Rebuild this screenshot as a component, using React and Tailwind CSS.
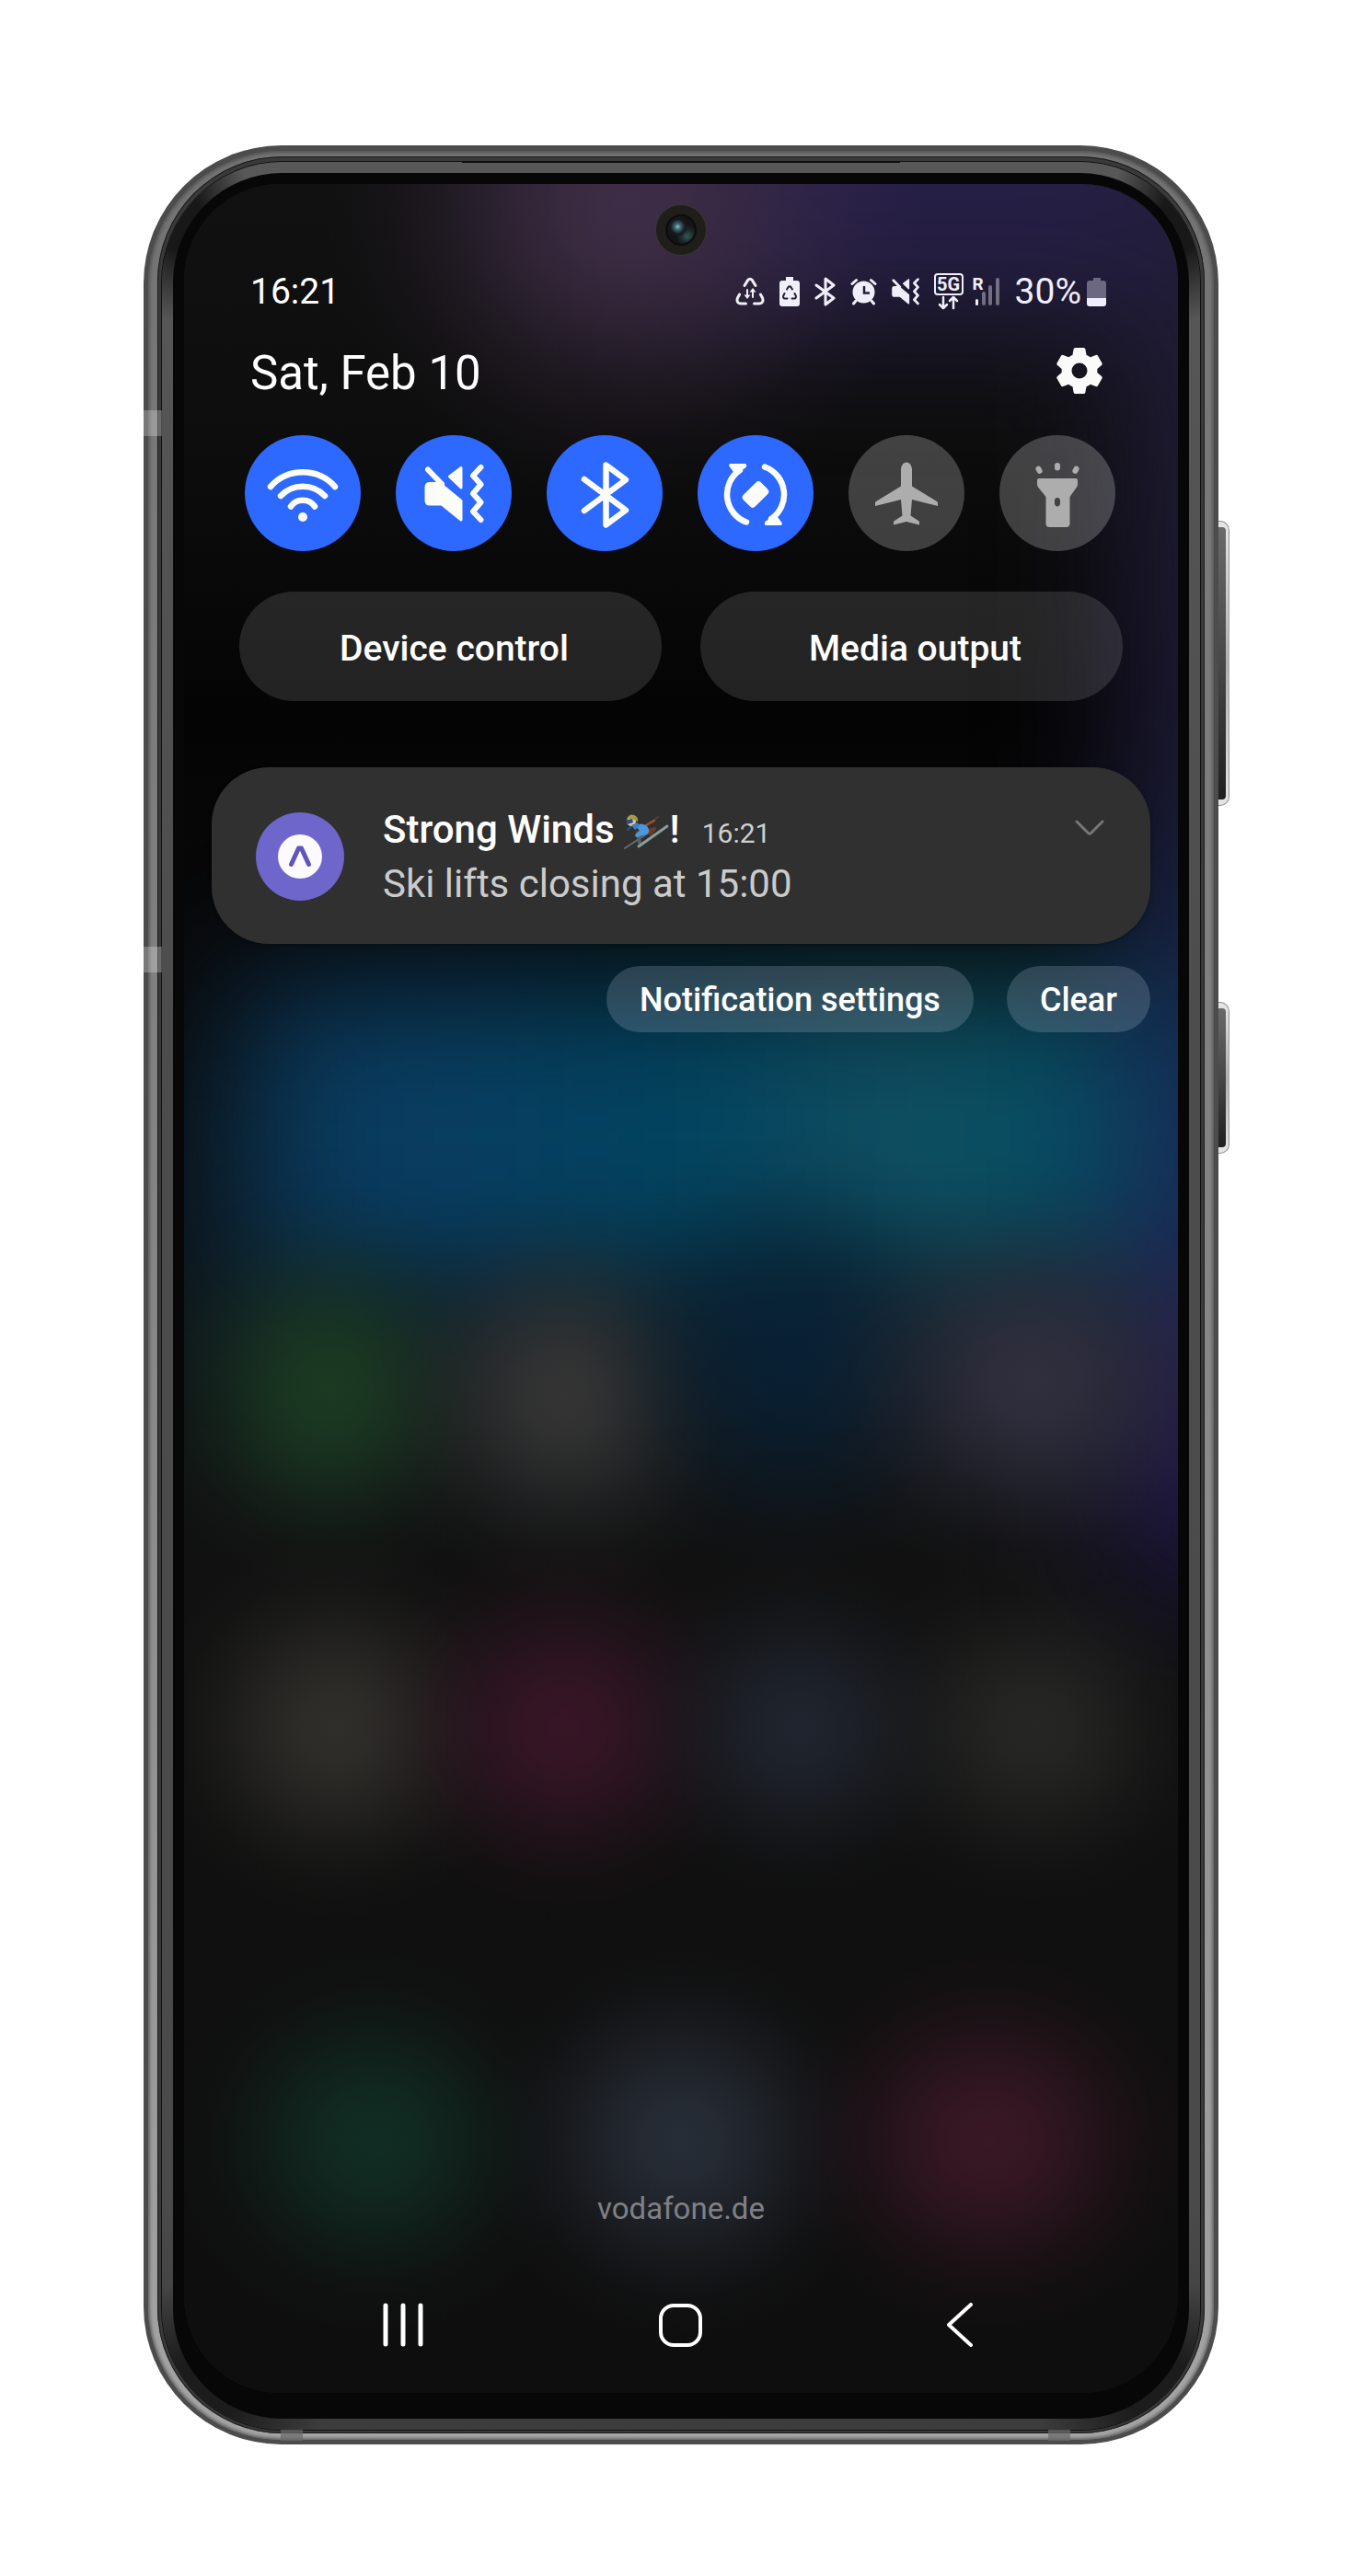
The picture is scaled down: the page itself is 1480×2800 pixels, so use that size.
import React from "react";

const glows = [
  { x: 480, y: 20, rx: 330, ry: 330, color: "#46324f", o: 0.85 },
  { x: 158, y: 1310, rx: 210, ry: 220, color: "#1b3a22", o: 1 },
  { x: 413, y: 1315, rx: 220, ry: 220, color: "#343434", o: 1 },
  { x: 661, y: 1270, rx: 230, ry: 250, color: "#082136", o: 0.9 },
  { x: 923, y: 1300, rx: 250, ry: 230, color: "#302f3e", o: 1 },
  { x: 165, y: 1677, rx: 210, ry: 210, color: "#2f2e2a", o: 1 },
  { x: 413, y: 1677, rx: 220, ry: 210, color: "#371526", o: 1 },
  { x: 668, y: 1677, rx: 200, ry: 190, color: "#1f242e", o: 1 },
  { x: 923, y: 1677, rx: 210, ry: 200, color: "#262625", o: 1 },
  { x: 205, y: 2126, rx: 220, ry: 210, color: "#112d23", o: 1 },
  { x: 540, y: 2126, rx: 220, ry: 215, color: "#272d37", o: 1 },
  { x: 875, y: 2126, rx: 230, ry: 215, color: "#391725", o: 1 },
];

function Wallpaper() {
  return (
    <svg
      className="absolute inset-0 h-full w-full"
      viewBox="0 0 1080 2400"
      preserveAspectRatio="none"
      aria-hidden="true"
    >
      <defs>
        <filter id="soft" x="-50%" y="-50%" width="200%" height="200%" colorInterpolationFilters="sRGB">
          <feGaussianBlur stdDeviation="70" />
        </filter>
        <linearGradient id="widget" x1="0" x2="1" y1="0" y2="0">
          <stop offset="0" stopColor="#0a3554" />
          <stop offset="0.18" stopColor="#0a3d62" />
          <stop offset="0.5" stopColor="#01435f" />
          <stop offset="0.75" stopColor="#124f61" />
          <stop offset="0.9" stopColor="#044e62" />
          <stop offset="1" stopColor="#0b4462" />
        </linearGradient>
        <linearGradient id="base" x1="0" x2="0" y1="0" y2="1">
          <stop offset="0" stopColor="#111111" />
          <stop offset="0.12" stopColor="#0d0d0d" />
          <stop offset="0.24" stopColor="#040404" />
          <stop offset="0.38" stopColor="#0a0a0c" />
          <stop offset="0.52" stopColor="#0f1519" />
          <stop offset="0.62" stopColor="#111111" />
          <stop offset="1" stopColor="#0e0e0e" />
        </linearGradient>
        <linearGradient id="edge" x1="0" x2="0" y1="0" y2="1">
          <stop offset="0" stopColor="#262046" />
          <stop offset="0.3" stopColor="#1f1c34" />
          <stop offset="0.5" stopColor="#1e1a34" />
          <stop offset="0.68" stopColor="#152a52" />
          <stop offset="0.77" stopColor="#182a54" />
          <stop offset="0.85" stopColor="#2a2054" />
          <stop offset="1" stopColor="#1c1244" />
        </linearGradient>
        {glows.map((g, i) => (
          <radialGradient key={i} id={"glow" + i}>
            <stop offset="0" stopColor={g.color} stopOpacity={g.o} />
            <stop offset="0.2" stopColor={g.color} stopOpacity={g.o * 0.89} />
            <stop offset="0.4" stopColor={g.color} stopOpacity={g.o * 0.63} />
            <stop offset="0.6" stopColor={g.color} stopOpacity={g.o * 0.33} />
            <stop offset="0.8" stopColor={g.color} stopOpacity={g.o * 0.1} />
            <stop offset="1" stopColor={g.color} stopOpacity="0" />
          </radialGradient>
        ))}
      </defs>
      <rect width="1080" height="2400" fill="url(#base)" />
      <g filter="url(#soft)">
        <rect x="560" y="-300" width="800" height="450" fill="#261f46" />
        <rect x="1020" y="-300" width="300" height="1820" fill="url(#edge)" />
        <rect x="55" y="872" width="975" height="325" fill="url(#widget)" />
      </g>
      {glows.map((g, i) => (
        <ellipse key={i} cx={g.x} cy={g.y} rx={g.rx} ry={g.ry} fill={"url(#glow" + i + ")"} />
      ))}
    </svg>
  );
}

/* Status bar glyphs */

function DataSaverIcon() {
  return (
    <svg width="32" height="32" viewBox="0 0 32 32" fill="none" stroke="currentColor" strokeWidth="3" strokeLinecap="round" strokeLinejoin="round" aria-label="Data saver" role="img">
      <path d="M10 9.5 13.6 3.6Q16 .8 18.4 3.6L22 9.5" />
      <path d="M4.6 19 2.4 23Q.8 28.6 6 29h5.500" />
      <path d="M27.400 19 29.600 23Q31.200 28.600 26 29h-5.500" />
      <path d="M13 14v8M19 22v-8" strokeWidth="2" />
      <path d="M9.500 19.500h7L13 24zM15.500 16.500h7L19 12z" fill="currentColor" stroke="none" />
    </svg>
  );
}

function RecycleBatteryIcon() {
  return (
    <svg width="22" height="32" viewBox="0 0 22 32" role="img" aria-label="Power saving">
      <path fill="currentColor" d="M7 0h8v4h4q3 0 3 3v22q0 3-3 3H3q-3 0-3-3V7q0-3 3-3h4z" />
      <g fill="none" stroke="#211c3d" strokeWidth="2" strokeLinecap="round">
        <path d="M8 13.500 9.600 11Q11 9.400 12.400 11L14 13.500" />
        <path d="M5.500 18 4.200 20.500Q3.600 23.400 6 23.500h2.500" />
        <path d="M16.500 18l1.300 2.500q.6 2.900-1.800 3h-2.500" />
      </g>
    </svg>
  );
}

function SmallBluetoothIcon() {
  return (
    <svg width="23" height="32" viewBox="0 0 23 32" fill="none" stroke="currentColor" strokeWidth="3" strokeLinecap="round" strokeLinejoin="round" role="img" aria-label="Bluetooth">
      <path d="M2 9 21 23 12 30V2l9 7L2 23" />
    </svg>
  );
}

function AlarmIcon() {
  return (
    <svg width="29" height="30" viewBox="0 0 29 30" role="img" aria-label="Alarm">
      <circle cx="14.500" cy="15.500" r="12" fill="currentColor" />
      <g fill="none" stroke="currentColor" strokeWidth="3" strokeLinecap="round">
        <path d="M2 6.500 6.500 2.500M27 6.500 22.500 2.500M6 25l-2.500 3M23 25l2.500 3" />
      </g>
      <path d="M15 9v7.500h6" fill="none" stroke="#211c3d" strokeWidth="2.500" />
    </svg>
  );
}

function SpeakerShape() {
  return (
    <g fill="currentColor" stroke="currentColor" strokeLinejoin="round" strokeLinecap="round">
      <path strokeWidth="3" d="M37 52.500h11L71 71.500V92L50 75H37q-4 0-4-4V56.500q0-4 4-4z" />
      <path strokeWidth="3" d="M58.500 45 71 35.500V57z" />
      <path strokeWidth="6" d="M35 37.500 50 53" />
      <path fill="none" strokeWidth="6" d="M92.500 35 84 44l8.500 9.500-8.500 10 8.500 9.500-8.500 10 8.500 9" />
    </g>
  );
}

function SmallMuteIcon() {
  return (
    <svg width="30" height="30" viewBox="31 32 65 64" role="img" aria-label="Vibrate">
      <SpeakerShape />
    </svg>
  );
}

function FiveGIcon() {
  return (
    <span className="flex w-8 flex-col items-center">
      <span className="flex h-6 w-8 items-center justify-center rounded-[4px] border-2 border-current text-[20px] leading-5 font-bold">
        5G
      </span>
      <svg width="24" height="16" viewBox="0 0 24 16" fill="none" stroke="currentColor" strokeWidth="2.500" strokeLinecap="round" strokeLinejoin="round" aria-hidden="true">
        <path d="M6 2v12M2 10l4 4 4-4M17 14V2M13 6l4-4 4 4" />
      </svg>
    </span>
  );
}

function SignalIcon() {
  return (
    <span className="relative">
      <span className="absolute -top-1 left-0 text-[19px] leading-6 font-bold">R</span>
      <svg width="30" height="32" viewBox="0 0 30 32" role="img" aria-label="Roaming signal">
        <rect x="3" y="24" width="3" height="7" rx="1.500" fill="currentColor" />
        <g fill="currentColor" opacity="0.4">
          <rect x="10" y="16" width="4" height="15" rx="2" />
          <rect x="17" y="9" width="4" height="22" rx="2" />
          <rect x="25" y="1" width="4" height="30" rx="2" />
        </g>
      </svg>
    </span>
  );
}

function BatteryIcon() {
  return (
    <svg width="21" height="32" viewBox="0 0 21 32" role="img" aria-label="Battery">
      <path fill="#6c6882" d="M7 1h8v3h3q3 0 3 3v16H0V7q0-3 3-3h4z" />
      <path fill="currentColor" d="M0 23h21v6q0 3-3 3H3q-3 0-3-3z" />
    </svg>
  );
}

/* Quick setting glyphs, drawn on the button's own 126-unit square */

const glyphs = {
  wifi: (
    <g fill="none" stroke="currentColor" strokeWidth="6.500" strokeLinecap="round">
      <path d="M28 56A47 47 0 0 1 98 56" />
      <path d="M39 66A33 33 0 0 1 87 66" />
      <path d="M50 77.500A16 16 0 0 1 76 77.500" />
      <circle cx="63" cy="89" r="5" fill="currentColor" stroke="none" />
    </g>
  ),
  mute: <SpeakerShape />,
  bluetooth: (
    <path d="M41 48 86 81.500 64.500 97.500V32.500L86 48.500 41 82" fill="none" stroke="currentColor" strokeWidth="6.500" strokeLinecap="round" strokeLinejoin="round" />
  ),
  rotate: (
    <g fill="currentColor">
      <rect x="54" y="51" width="18" height="27" rx="4" transform="rotate(45 63 64.500)" />
      {["", "rotate(180 63 64.500)"].map((t) => (
        <g key={t} transform={t || undefined}>
          <path d="M73 34.500A32 32 0 0 1 80 91" fill="none" stroke="currentColor" strokeWidth="6.500" strokeLinecap="round" />
          <path d="M74 93.500 83 88l4 1 4.500 6q1 3-1.500 3H74q-2.500-1.500 0-4.500z" />
        </g>
      ))}
    </g>
  ),
  plane: (
    <path fill="currentColor" d="M63 29.500c3.500 0 6 4 6 8v18l27 16.500q1 .500 1 1.500v3.500L69 70l-1.500 17.500L76 93q1 .500 1 1.500v3L63 94l-14 3.500v-3q0-1 1-1.500l8.500-5.500L57 70l-28 7V73.500q0-1 1-1.500l27-16.500v-18c0-4 2.500-8 6-8z" />
  ),
  torch: (
    <g fill="currentColor">
      <rect x="60" y="30" width="6" height="8.500" rx="3" />
      <rect x="40" y="33.500" width="6" height="8.500" rx="3" transform="rotate(-28 43 37.700)" />
      <rect x="80" y="33.500" width="6" height="8.500" rx="3" transform="rotate(28 83 37.700)" />
      <path fillRule="evenodd" d="M41 49q0-2 2-2h40q2 0 2 2v4q0 2-1 3.500L76.500 67v29q0 4-4 4h-18q-4 0-4-4V67L42 56.500q-1-1.500-1-3.500zM63 68c-1.800 0-3 1.300-3 3v3c0 2 1.200 3.500 3 3.500s3-1.500 3-3.500v-3c0-1.700-1.200-3-3-3z" />
    </g>
  ),
};

const toggles = [
  { id: "wifi", label: "Wi-Fi", on: true },
  { id: "mute", label: "Vibrate", on: true },
  { id: "bluetooth", label: "Bluetooth", on: true },
  { id: "rotate", label: "Auto rotate", on: true },
  { id: "plane", label: "Airplane mode", on: false },
  { id: "torch", label: "Torch", on: false },
];

function QuickToggle({ id, label, on }) {
  return (
    <button
      type="button"
      aria-label={label}
      aria-pressed={on}
      className={
        on
          ? "size-[126px] rounded-full bg-[#2d68ff] text-[#fcfdf8]"
          : "size-[126px] rounded-full bg-white/22 text-[#adadad]"
      }
    >
      <svg viewBox="0 0 126 126" className="size-full" aria-hidden="true">
        {glyphs[id]}
      </svg>
    </button>
  );
}

function SkierIcon() {
  return (
    <svg width="50" height="40" viewBox="0 0 50 40" role="img" aria-label="Skier" className="inline-block">
      <g fill="none" strokeLinecap="round" strokeLinejoin="round">
        <path d="M13 20 37 3" stroke="#5d3c33" strokeWidth="2" />
        <path d="M1 37 33 16" stroke="#666b6b" strokeWidth="2" />
        <path d="M24 19 33 16 29 21" stroke="#6d3a26" strokeWidth="4" />
        <path d="M16 25 17 31" stroke="#5b6068" strokeWidth="4" />
        <path d="M16 35 47 13" stroke="#8e9c9c" strokeWidth="3" />
        <path d="M8 13 4 17" stroke="#35507a" strokeWidth="2" />
        <path d="M24 12 33 7" stroke="#a14f2c" strokeWidth="2.500" />
      </g>
      <path d="M13 13q6-5 12 0 4 5 1 8-4 2-12 4-3-1-1-4l4-3z" fill="#4b97dc" />
      <circle cx="8" cy="8" r="5" fill="#d8c9a0" />
      <path d="M3 5q3-6 8-4 5 2 4 7L8 5z" fill="#a89a45" />
      <path d="M2 6.500 9 5l1 4-6 2z" fill="#2e4c86" />
      <path d="M8 12l7-3 2 4-5 4z" fill="#3c7fc4" />
    </svg>
  );
}

function GearIcon() {
  return (
    <svg width="50" height="50" viewBox="0 0 50 50" aria-hidden="true">
      <path
        fill="#fafafa"
        fillRule="evenodd"
        d="M20.500 0h9q1.600 0 1.900 1.500l1.100 6.200q2.300 1 4.300 2.500l5.900-2.200q1.500-.5 2.300.8l4.400 7.800q.8 1.300-.4 2.400l-4.700 4q.2 2 0 4l4.700 4q1.200 1.100.4 2.400l-4.400 7.800q-.8 1.300-2.300.8l-5.900-2.200q-2 1.500-4.300 2.500l-1.100 6.200Q31.100 50 29.500 50h-9q-1.600 0-1.900-1.500l-1.100-6.200q-2.300-1-4.300-2.500l-5.900 2.200q-1.500.5-2.300-.8L.6 33.400q-.8-1.300.4-2.400l4.700-4q-.2-2 0-4L1 19Q-.2 17.900.6 16.600L5 8.800Q5.800 7.500 7.300 8l5.900 2.200q2-1.500 4.300-2.500l1.100-6.200Q18.900 0 20.500 0zM25 16.500a8.500 8.500 0 1 0 0 17 8.500 8.500 0 0 0 0-17z"
      />
    </svg>
  );
}

function Notification() {
  return (
    <article className="flex items-center gap-[42px] rounded-[62px] bg-[#323232]/97 pt-[38px] pr-12 pb-9 pl-12 shadow-[0_1px_4px_rgba(0,0,0,0.3)]">
      <svg width="96" height="96" viewBox="0 0 96 96" className="shrink-0" role="img" aria-label="App">
        <circle cx="48" cy="48" r="48" fill="#6e66cb" />
        <circle cx="48" cy="48" r="24" fill="#fbfbff" />
        <path d="M38.500 56.500 46.500 39h3l8 17.500" fill="none" stroke="#6257b8" strokeWidth="5" strokeLinecap="round" strokeLinejoin="round" />
      </svg>
      <div className="min-w-0 flex-1">
        <h2 className="flex items-baseline text-[42px] leading-[59px] font-medium text-white">
          <span>Strong Winds</span>
          <span className="ml-2.5 h-10 self-center leading-none">
            <SkierIcon />
          </span>
          <span>!</span>
          <time className="ml-6 text-[30px] leading-none font-normal text-[#cfcfcf]">16:21</time>
        </h2>
        <p className="text-[42px] leading-[59px] text-[#cbcbcb]">Ski lifts closing at 15:00</p>
      </div>
      <button type="button" aria-label="Expand" className="flex h-10 items-center self-start pt-4">
        <svg width="36" height="20" viewBox="0 0 36 20" fill="none" stroke="#767676" strokeWidth="3" strokeLinecap="round" strokeLinejoin="round" aria-hidden="true">
          <path d="M4 3 16.500 15.500q1.500 1.500 3 0L32 3" />
        </svg>
      </button>
    </article>
  );
}

function NavBar() {
  return (
    <nav className="flex h-[148px] items-start justify-between px-[202px] pt-[50px] text-white" aria-label="System">
      <button type="button" aria-label="Recent apps">
        <svg width="70" height="48" viewBox="0 0 70 48" fill="none" stroke="currentColor" strokeWidth="5" strokeLinecap="round" aria-hidden="true">
          <path d="M17 3v42M36 3v42M55 3v42" />
        </svg>
      </button>
      <button type="button" aria-label="Home">
        <svg width="70" height="48" viewBox="0 0 70 48" fill="none" stroke="currentColor" strokeWidth="4" aria-hidden="true">
          <rect x="13" y="3" width="43" height="43" rx="14" />
        </svg>
      </button>
      <button type="button" aria-label="Back">
        <svg width="70" height="48" viewBox="0 0 70 48" fill="none" stroke="currentColor" strokeWidth="4" strokeLinecap="round" strokeLinejoin="round" aria-hidden="true">
          <path d="M47 2 23 24 47 46" />
        </svg>
      </button>
    </nav>
  );
}

function Screen() {
  return (
    <main className="relative flex flex-1 flex-col overflow-hidden rounded-[104px] bg-[#0e0e0e]">
      <Wallpaper />
      <span className="absolute top-[22px] left-1/2 size-14 -translate-x-1/2 rounded-full border border-[#3a3833] bg-[#201e1b] p-[10px]">
        <span className="block size-full rounded-full border-2 border-[#0c0c0c] bg-[radial-gradient(circle_at_38%_38%,#8fc0d4_0%,#3f6876_12%,#16191a_30%,transparent_45%),radial-gradient(circle_at_72%_72%,#2f5a52_0%,#1d2c2b_22%,#131514_40%)]" />
      </span>
      <div className="relative flex flex-1 flex-col">
        <header className="pt-[95px] pr-[78px] pl-[72px] text-white">
          <div className="flex h-11 items-center justify-between text-[39px] leading-[44px]">
            <time>16:21</time>
            <div className="flex items-center gap-4 text-[#f0eef8]">
              <DataSaverIcon />
              <RecycleBatteryIcon />
              <SmallBluetoothIcon />
              <AlarmIcon />
              <SmallMuteIcon />
              <span className="flex items-center gap-[10px]">
                <FiveGIcon />
                <SignalIcon />
              </span>
              <span className="flex items-center gap-[6px]">
                <span>30%</span>
                <BatteryIcon />
              </span>
            </div>
          </div>
          <div className="mt-9 flex h-[60px] items-center justify-between">
            <h1 className="pt-0.5 text-[51px] leading-[60px]">Sat, Feb 10</h1>
            <button type="button" aria-label="Settings" className="mr-1 mb-1">
              <GearIcon />
            </button>
          </div>
        </header>

        <section className="mt-[38px] flex justify-between pr-[68px] pl-[66px]" aria-label="Quick settings">
          {toggles.map((t) => (
            <QuickToggle key={t.id} {...t} />
          ))}
        </section>

        <section className="mt-11 grid grid-cols-2 gap-[42px] px-[60px] text-[39px] leading-[44px] font-medium text-white" aria-label="Panels">
          <button type="button" className="h-[119px] rounded-full bg-white/12 pt-1 pl-2">Device control</button>
          <button type="button" className="h-[119px] rounded-full bg-white/12 pt-1 pl-2">Media output</button>
        </section>

        <section className="mt-[72px] px-[30px]" aria-label="Notifications">
          <Notification />
          <div className="mt-6 flex justify-end gap-9 text-[36px] leading-[42px] font-medium text-white">
            <button type="button" className="h-[72px] rounded-full bg-[#c8d2e6]/20 px-9 pt-0.5">Notification settings</button>
            <button type="button" className="h-[72px] rounded-full bg-[#c8d2e6]/20 px-9 pt-0.5">Clear</button>
          </div>
        </section>

        <p className="mt-auto mb-8 pt-20 text-center text-[33px] leading-[40px] text-[#808084]">vodafone.de</p>
        <NavBar />
      </div>
    </main>
  );
}

function SideButton({ place }) {
  return (
    <span className={"absolute left-full w-3 rounded-r-[10px] bg-gradient-to-b from-[#8c8c8c] via-[#a8a8a8] to-[#8c8c8c] py-px pr-px " + place}>
      <span className="block h-full rounded-r-[9px] bg-gradient-to-b from-[#e6e6e6] via-[#b0b0b0] to-[#e6e6e6] py-1.5 pr-[3px]">
        <span className="block h-full rounded-r-[4px] bg-gradient-to-b from-[#6a6a6a] via-[#474747] to-[#202020]" />
      </span>
    </span>
  );
}

export default function App() {
  return (
    <div className="flex min-h-screen flex-col bg-white px-10 pt-[158px] pb-[143px] font-['Roboto',sans-serif]">
      <div className="relative mx-auto flex w-full max-w-[1168px] flex-1 flex-col">
        <SideButton place="top-[408px] h-[310px]" />
        <SideButton place="top-[931px] h-[165px]" />
        <div className="relative flex flex-1 flex-col overflow-hidden rounded-[150px] bg-[#4c4c4c] px-[5px] pt-[6px] pb-[5px]">
          <div className="flex flex-1 flex-col rounded-[145px] bg-gradient-to-b from-[#737373] via-[#868686] to-[#a4a4a4] px-[10px] pt-[6px] pb-[7px] shadow-[inset_0_0_3px_2px_rgba(70,70,70,0.6)]">
            <div className="flex flex-1 flex-col rounded-[136px] bg-[#3a3a3a] px-[5px] pt-[6px] pb-1 shadow-[inset_0_0_0_1px_#1c1c1c]">
              <div className="flex flex-1 flex-col rounded-[131px] bg-[radial-gradient(ellipse_80px_110px_at_18px_62px,#181818_30%,transparent),radial-gradient(ellipse_80px_110px_at_calc(100%-18px)_62px,#181818_30%,transparent),radial-gradient(ellipse_140px_120px_at_40px_calc(100%-40px),#1c1c1c_30%,transparent),radial-gradient(ellipse_140px_120px_at_calc(100%-40px)_calc(100%-40px),#1c1c1c_30%,transparent),linear-gradient(to_bottom,#585858,#4c4c4c_40%,#4a4a4a_90%,#3c3c3c)] p-3 shadow-[0_0_0_1px_#111]">
                <div className="flex flex-1 flex-col rounded-[119px] bg-[#070707] px-3 pt-3 pb-7">
                  <Screen />
                </div>
              </div>
            </div>
          </div>
          <span className="absolute top-[17px] left-1/2 h-0.5 w-[476px] -translate-x-1/2 bg-[#0d0d0d]" />
          <span className="absolute top-[288px] left-0 h-7 w-5 bg-white/25" />
          <span className="absolute top-[871px] left-0 h-7 w-5 bg-white/25" />
          <span className="absolute bottom-1 left-[149px] h-3 w-6 bg-[#6a6a6a]/70" />
          <span className="absolute right-[161px] bottom-1 h-3 w-6 bg-[#6a6a6a]/70" />
        </div>
      </div>
    </div>
  );
}
